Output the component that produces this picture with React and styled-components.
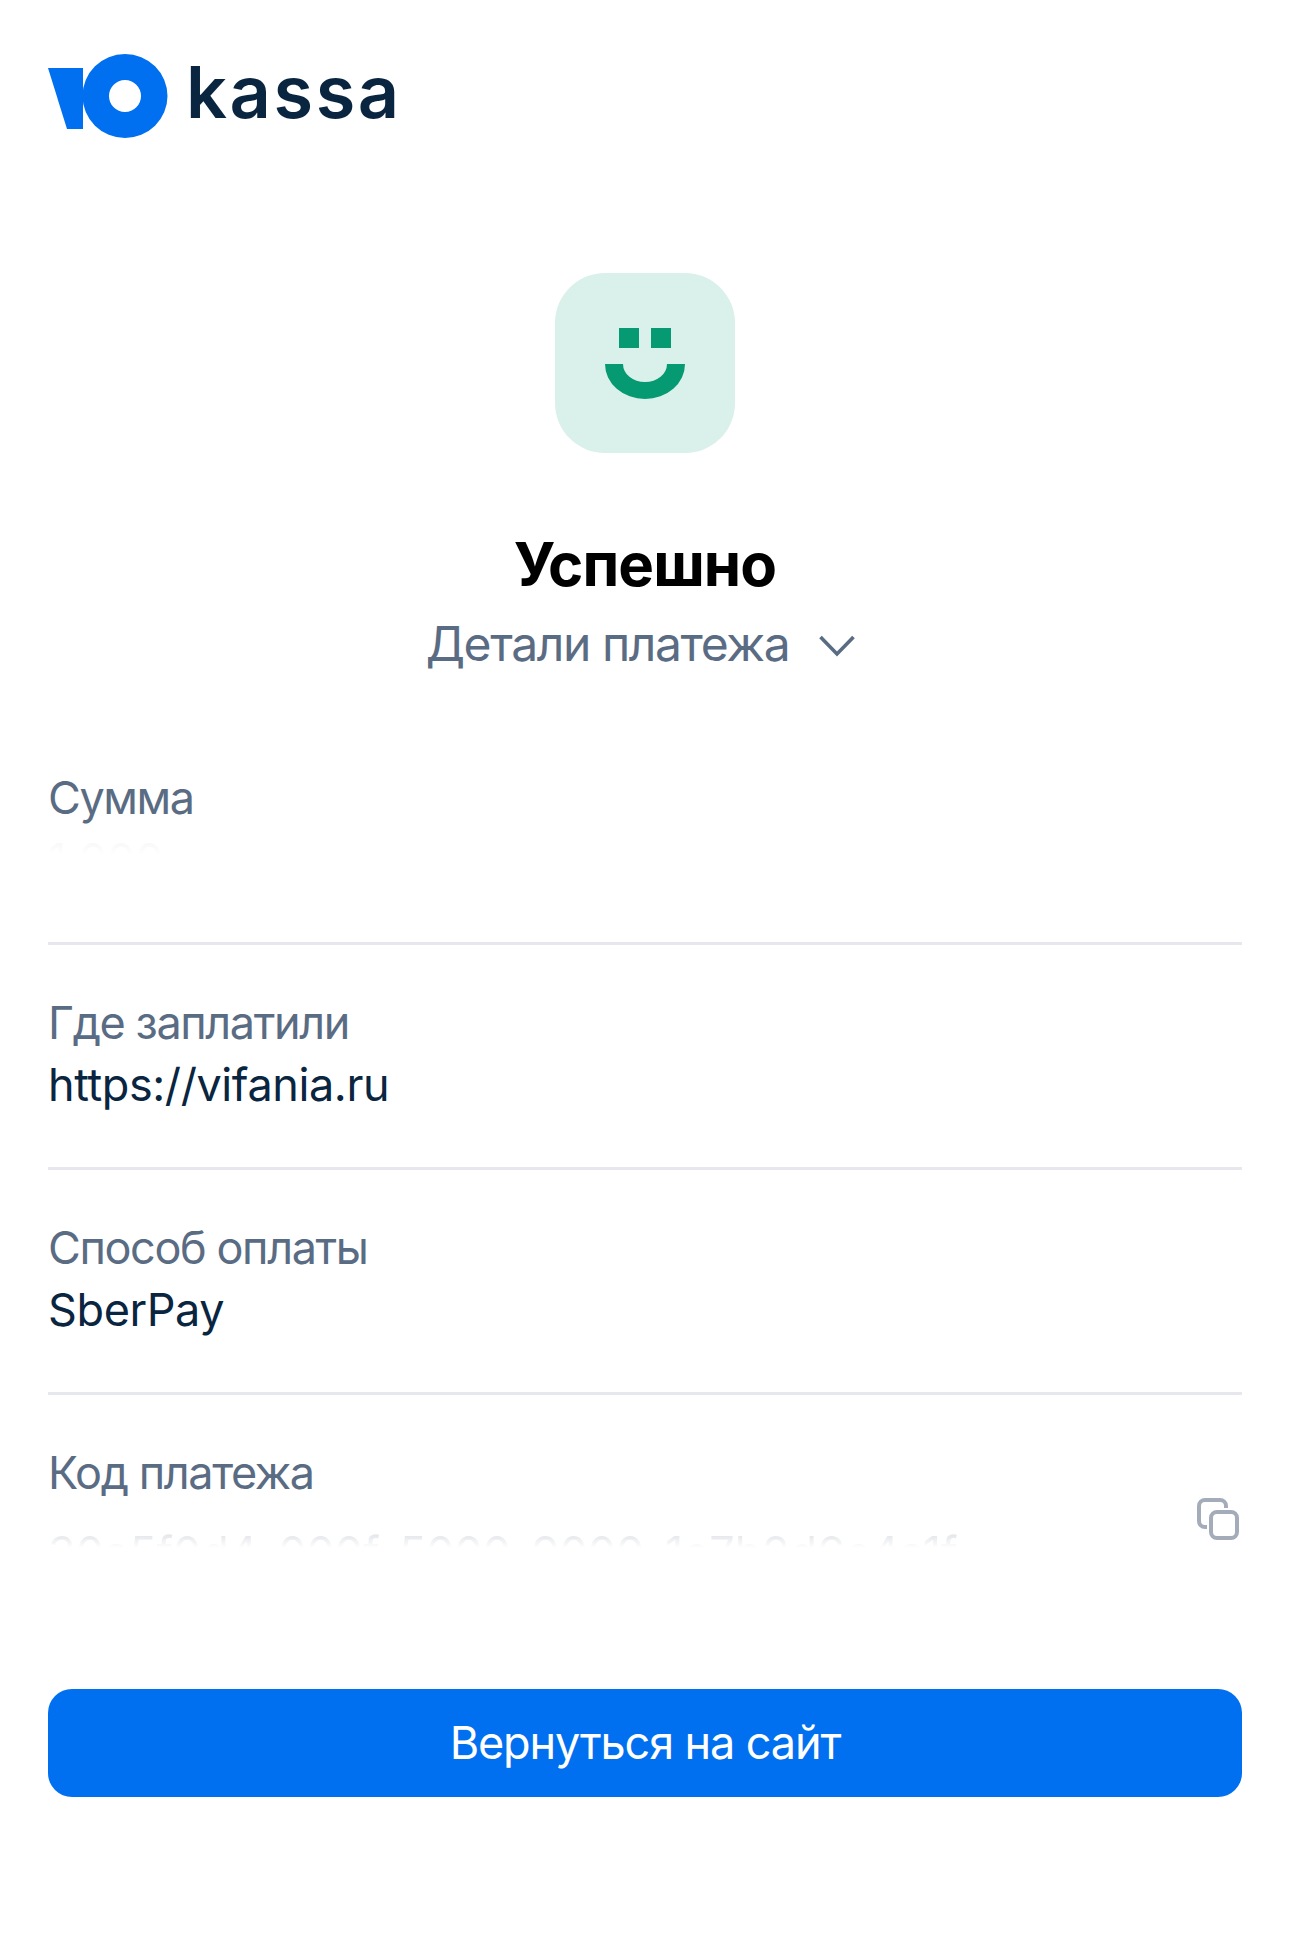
import React from "react";
import styled, { createGlobalStyle } from "styled-components";

const Global = createGlobalStyle`
  html, body { margin: 0; padding: 0; background: #fff; }
  body { font-family: Inter, "Noto Sans", sans-serif; }
`;

const Page = styled.div`
  width: 1290px;
  height: 1939px;
  box-sizing: border-box;
  padding: 52px 48px 0;
  display: flex;
  flex-direction: column;
  overflow: hidden;
`;

const Brand = styled.header`
  display: flex;
  align-items: center;
  gap: 12px;
  height: 88px;
`;

const BrandName = styled.span`
  margin-top: -8px;
  font-family: Inter, sans-serif;
  font-weight: 600;
  font-size: 72px;
  line-height: 80px;
  letter-spacing: 2.6px;
  color: #0a2540;
`;

const Status = styled.section`
  margin-top: 133px;
  display: flex;
  flex-direction: column;
  align-items: center;
`;

const Badge = styled.div`
  width: 180px;
  height: 180px;
  border-radius: 50px;
  background: #daf0ea;
  display: flex;
  align-items: center;
  justify-content: center;
`;

const Title = styled.h1`
  margin: 75px 0 0;
  font-size: 60px;
  line-height: 72px;
  font-weight: 700;
  letter-spacing: -0.9px;
  color: #000;
`;

const Details = styled.div`
  margin-top: 12px;
  display: flex;
  align-items: center;
  gap: 30px;
  font-size: 48px;
  line-height: 64px;
  letter-spacing: -1.4px;
  color: #5a6c83;
`;

const Chevron = styled.svg`
  margin-right: 9px;
  margin-top: 4px;
`;

const Rows = styled.div`
  margin-top: 44px;
`;

const Row = styled.div`
  position: relative;
  height: ${(p) => (p.$last ? "294px" : "225px")};
  box-sizing: border-box;
  padding-top: 47px;
  border-bottom: ${(p) => (p.$last ? "none" : "3px solid #e6e8ee")};
`;

const Label = styled.div`
  font-size: 45px;
  line-height: 62px;
  letter-spacing: -1.4px;
  color: #5a6c83;
`;

const Value = styled.div`
  font-size: 45px;
  line-height: 62px;
  letter-spacing: -0.4px;
  color: #0a2540;
`;

const Ghost = styled.div`
  width: fit-content;
  margin-top: ${(p) => p.$top}px;
  font-size: 45px;
  line-height: 62px;
  letter-spacing: -0.1px;
  white-space: nowrap;
  color: transparent;
  background: linear-gradient(rgba(10, 37, 64, ${(p) => p.$alpha}) 14px, rgba(10, 37, 64, 0) 26px);
  -webkit-background-clip: text;
  background-clip: text;
`;

const CopyButton = styled.div`
  position: absolute;
  right: 3px;
  top: 103px;
  line-height: 0;
`;

const Action = styled.button`
  width: 100%;
  height: 108px;
  border: 0;
  border-radius: 24px;
  background: #0070f0;
  color: #fff;
  font-family: inherit;
  font-size: 45px;
  letter-spacing: -1.1px;
  padding-bottom: 3px;
`;

export default function App() {
  return (
    <Page>
      <Global />
      <Brand>
        <svg width="126" height="84" viewBox="0 0 126 84" style={{ flex: "none" }}>
          <path d="M0 14h35v61H19z" fill="#0070f0" />
          <path fillRule="evenodd" d="M77 0a42.500 42 0 1 1 0 84a42.500 42 0 1 1 0-84zM77 26a16 16 0 1 0 0 32a16 16 0 1 0 0-32z" fill="#0070f0" />
        </svg>
        <BrandName>kassa</BrandName>
      </Brand>
      <Status>
        <Badge>
          <svg width="80" height="71" viewBox="0 0 80 71">
            <path d="M14 0h20v20H14zM46 0h20v20H46z" fill="#069a72" />
            <path d="M0 36h18a22 18 0 0 0 44 0h18a40 35 0 0 1-80 0z" fill="#069a72" />
          </svg>
        </Badge>
        <Title>Успешно</Title>
        <Details>
          <span>Детали платежа</span>
          <Chevron width="36" height="22" viewBox="0 0 36 22">
            <path d="M1.5 2L18 19L34.5 2" fill="none" stroke="#5a6c83" strokeWidth="3.6" />
          </Chevron>
        </Details>
      </Status>
      <Rows>
        <Row>
          <Label>Сумма</Label>
          <Ghost $top={0} $alpha={0.03}>1 000</Ghost>
        </Row>
        <Row>
          <Label>Где заплатили</Label>
          <Value>https://vifania.ru</Value>
        </Row>
        <Row>
          <Label>Способ оплаты</Label>
          <Value>SberPay</Value>
        </Row>
        <Row $last>
          <Label>Код платежа</Label>
          <Ghost $top={18} $alpha={0.1}>30a5f0d4-000f-5000-9000-1e7b2d6c4a1f</Ghost>
          <CopyButton>
            <svg width="42" height="42" viewBox="0 0 42 42" fill="none" stroke="#a3acb8" strokeWidth="4">
              <path d="M10 29H8a6 6 0 0 1-6-6V8a6 6 0 0 1 6-6h15a6 6 0 0 1 6 6v2" />
              <rect x="14" y="14" width="26" height="26" rx="6" />
            </svg>
          </CopyButton>
        </Row>
      </Rows>
      <Action>Вернуться на сайт</Action>
    </Page>
  );
}
